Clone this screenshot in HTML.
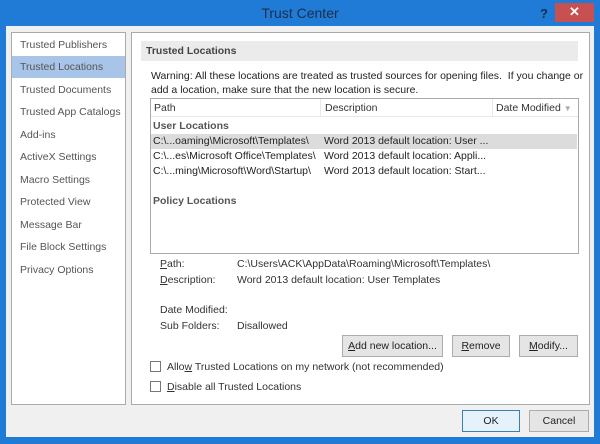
<!DOCTYPE html>
<html><head><style>
*{margin:0;padding:0;box-sizing:border-box}
body{width:600px;height:444px;background:#1f7bd6;font-family:"Liberation Sans",sans-serif;font-size:10.5px;color:#333;position:relative;overflow:hidden}
.a{position:absolute;white-space:nowrap}
.title{left:0;top:0;width:600px;height:27px;text-align:center;line-height:27px;font-size:14px;color:#1a2f4a}
.client{left:6px;top:26px;width:588px;height:411px;background:#f0f0f0}
.panel{background:#fff;border:1px solid #aaa}
.nav{color:#555;left:20px}
.btn{background:#e5e5e5;border:1px solid #acacac;text-align:center;line-height:20px;color:#222}
.cb{width:11px;height:11px;border:1px solid #777;background:#fff}
u{text-decoration:underline}
</style></head><body>
<div class="a title">Trust Center</div>
<div class="a" style="left:540px;top:6px;font-size:13px;color:#1a2f4a;font-weight:bold">?</div>
<div class="a" style="left:555px;top:3px;width:39px;height:19px;background:#c75050;color:#fff;text-align:center;line-height:18px;font-size:13px;font-weight:bold">✕</div>
<div class="a client"></div>
<div class="a panel" style="left:11px;top:32px;width:115px;height:373px"></div>
<div class="a" style="left:12px;top:56px;width:113px;height:22px;background:#a8c4e8"></div>
<div class="a nav" style="top:39px">Trusted Publishers</div>
<div class="a nav" style="top:61px">Trusted Locations</div>
<div class="a nav" style="top:84px">Trusted Documents</div>
<div class="a nav" style="top:106px">Trusted App Catalogs</div>
<div class="a nav" style="top:129px">Add-ins</div>
<div class="a nav" style="top:151px">ActiveX Settings</div>
<div class="a nav" style="top:174px">Macro Settings</div>
<div class="a nav" style="top:196px">Protected View</div>
<div class="a nav" style="top:219px">Message Bar</div>
<div class="a nav" style="top:241px">File Block Settings</div>
<div class="a nav" style="top:264px">Privacy Options</div>
<div class="a panel" style="left:131px;top:32px;width:459px;height:373px"></div>
<div class="a" style="left:141px;top:41px;width:437px;height:20px;background:#ebebeb;font-weight:bold;line-height:20px;padding-left:5px;color:#444">Trusted Locations</div>
<div class="a" style="left:151px;top:69px;line-height:14px;color:#222">Warning: All these locations are treated as trusted sources for opening files.&nbsp; If you change or<br>add a location, make sure that the new location is secure.</div>
<div class="a" style="left:150px;top:98px;width:429px;height:156px;background:#fff;border:1px solid #aaa"></div>
<div class="a" style="left:151px;top:116px;width:427px;height:1px;background:#e8e8e8"></div>
<div class="a" style="left:320px;top:99px;width:1px;height:17px;background:#e8e8e8"></div>
<div class="a" style="left:492px;top:99px;width:1px;height:17px;background:#e8e8e8"></div>
<div class="a" style="left:154px;top:102px;color:#333">Path</div>
<div class="a" style="left:325px;top:102px;color:#333">Description</div>
<div class="a" style="left:496px;top:102px;color:#333">Date Modified <span style="color:#aaa;font-size:8px">▼</span></div>
<div class="a" style="left:153px;top:120px;font-weight:bold;color:#555">User Locations</div>
<div class="a" style="left:151px;top:134px;width:426px;height:15px;background:#dcdcdc"></div>
<div class="a" style="left:153px;top:135px;color:#222">C:\...oaming\Microsoft\Templates\</div>
<div class="a" style="left:324px;top:135px;color:#222">Word 2013 default location: User ...</div>
<div class="a" style="left:153px;top:150px;color:#222">C:\...es\Microsoft Office\Templates\</div>
<div class="a" style="left:324px;top:150px;color:#222">Word 2013 default location: Appli...</div>
<div class="a" style="left:153px;top:165px;color:#222">C:\...ming\Microsoft\Word\Startup\</div>
<div class="a" style="left:324px;top:165px;color:#222">Word 2013 default location: Start...</div>
<div class="a" style="left:153px;top:195px;font-weight:bold;color:#555">Policy Locations</div>
<div class="a" style="left:160px;top:258px"><u>P</u>ath:</div>
<div class="a" style="left:237px;top:258px">C:\Users\ACK\AppData\Roaming\Microsoft\Templates\</div>
<div class="a" style="left:160px;top:274px"><u>D</u>escription:</div>
<div class="a" style="left:237px;top:274px">Word 2013 default location: User Templates</div>
<div class="a" style="left:160px;top:304px">Date Modified:</div>
<div class="a" style="left:160px;top:320px">Sub Folders:</div>
<div class="a" style="left:237px;top:320px">Disallowed</div>
<div class="a btn" style="left:342px;top:335px;width:101px;height:22px"><u>A</u>dd new location...</div>
<div class="a btn" style="left:452px;top:335px;width:58px;height:22px"><u>R</u>emove</div>
<div class="a btn" style="left:519px;top:335px;width:59px;height:22px"><u>M</u>odify...</div>
<div class="a cb" style="left:150px;top:361px"></div>
<div class="a" style="left:167px;top:361px">Allo<u>w</u> Trusted Locations on my network (not recommended)</div>
<div class="a cb" style="left:150px;top:381px"></div>
<div class="a" style="left:167px;top:381px"><u>D</u>isable all Trusted Locations</div>
<div class="a btn" style="left:462px;top:410px;width:58px;height:22px;border-color:#3c7fb1;background:#e5f1fb">OK</div>
<div class="a btn" style="left:529px;top:410px;width:60px;height:22px">Cancel</div>
</body></html>
